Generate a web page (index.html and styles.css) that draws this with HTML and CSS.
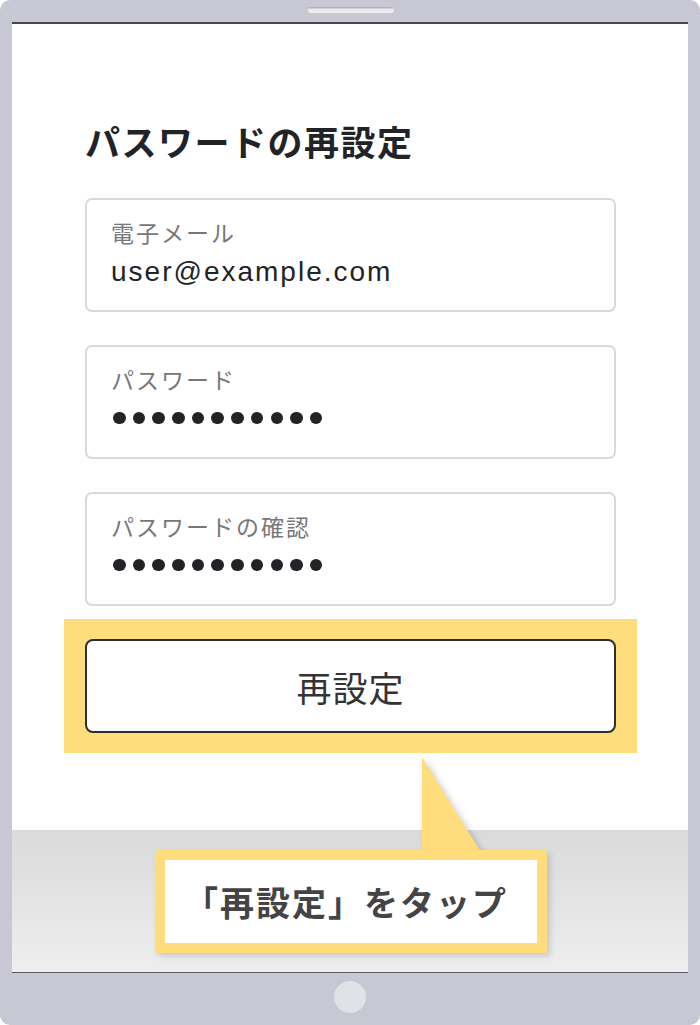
FILE: index.html
```html
<!DOCTYPE html>
<html lang="ja">
<head>
<meta charset="utf-8">
<title>パスワードの再設定</title>
<link rel="stylesheet" href="styles.css">
</head>
<body>
<div class="device">
  <div class="device-top"><div class="speaker"></div></div>
  <div class="screen">
    <div class="content">
      <h1 class="title">パスワードの再設定</h1>
      <div class="fields">
        <div class="field">
          <div class="label">電子メール</div>
          <div class="value">user@example.com</div>
        </div>
        <div class="field">
          <div class="label">パスワード</div>
          <div class="dots"><span class="dot"></span><span class="dot"></span><span class="dot"></span><span class="dot"></span><span class="dot"></span><span class="dot"></span><span class="dot"></span><span class="dot"></span><span class="dot"></span><span class="dot"></span><span class="dot"></span></div>
        </div>
        <div class="field">
          <div class="label">パスワードの確認</div>
          <div class="dots"><span class="dot"></span><span class="dot"></span><span class="dot"></span><span class="dot"></span><span class="dot"></span><span class="dot"></span><span class="dot"></span><span class="dot"></span><span class="dot"></span><span class="dot"></span><span class="dot"></span></div>
        </div>
      </div>
      <div class="highlight">
        <div class="button">再設定</div>
      </div>
    </div>
    <div class="toolbar"></div>
    <svg class="pointer" width="62" height="100" viewBox="0 0 62 100"><polygon points="0,0 0,100 62,100" fill="#ffdc7c"/></svg>
    <div class="callout">「再設定」をタップ</div>
  </div>
  <div class="device-bottom"><div class="home"></div></div>
</div>
</body>
</html>
```

FILE: styles.css
```css
html, body {
  margin: 0;
  padding: 0;
  background: #ffffff;
}
body {
  font-family: "Noto Sans CJK JP", "Noto Sans", sans-serif;
}
.device {
  width: 700px;
  height: 1025px;
  background: #c8c8d4;
  border-radius: 10px;
  display: flex;
  flex-direction: column;
  overflow: hidden;
}
.device-top {
  height: 22px;
  display: flex;
  justify-content: center;
  align-items: flex-start;
  padding-left: 2px;
  box-sizing: border-box;
}
.speaker {
  margin-top: 7px;
  width: 86px;
  height: 6px;
  border-radius: 4px;
  background: linear-gradient(#a4a4a8, #e9e9ec 40%, #f0f0f2);
}
.screen {
  position: relative;
  margin: 0 12px;
  height: 951px;
  box-sizing: border-box;
  background: #ffffff;
  border-top: 2px solid #45464a;
  border-bottom: 1px solid #5a5a5e;
  display: flex;
  flex-direction: column;
}
.content {
  flex: 1;
  padding: 97px 72px 0 73px;
}
.title {
  margin: 0;
  font-size: 35px;
  line-height: 40px;
  font-weight: 700;
  letter-spacing: 1.5px;
  color: #222326;
}
.fields {
  margin-top: 37px;
  display: flex;
  flex-direction: column;
  gap: 33px;
}
.field {
  height: 114px;
  box-sizing: border-box;
  border: 2px solid #d6d9dd;
  border-radius: 7px;
  padding: 18px 24px 0;
}
.label {
  font-size: 23px;
  line-height: 28px;
  letter-spacing: 2px;
  color: #77777a;
}
.value {
  margin-top: 10px;
  font-family: "Liberation Sans", Arial, sans-serif;
  font-size: 28px;
  line-height: 32px;
  letter-spacing: 2px;
  color: #222326;
}
.dots {
  margin-top: 12px;
  height: 26px;
  display: flex;
  align-items: center;
  gap: 7.2px;
  padding-left: 2px;
}
.dot {
  width: 12.5px;
  height: 12.5px;
  border-radius: 50%;
  background: #222326;
}
.highlight {
  margin: 13px -21px 0 -21px;
  padding: 20px 21px;
  background: #ffdc7c;
}
.button {
  height: 94px;
  box-sizing: border-box;
  background: #ffffff;
  border: 2px solid #2c2d30;
  border-radius: 8px;
  display: flex;
  align-items: center;
  justify-content: center;
  font-size: 35px;
  letter-spacing: 1px;
  color: #333336;
}
.toolbar {
  height: 142px;
  background: linear-gradient(#dadada, #eeeeee);
}
.pointer {
  position: absolute;
  left: 410px;
  top: 733px;
  filter: drop-shadow(3px 2px 3px rgba(0, 0, 0, 0.18));
}
.callout {
  position: absolute;
  left: 143px;
  top: 826px;
  width: 392px;
  height: 103px;
  box-sizing: border-box;
  border: 10px solid #ffdc7c;
  background: #ffffff;
  box-shadow: 3px 3px 6px rgba(0, 0, 0, 0.15);
  display: flex;
  align-items: center;
  justify-content: center;
  padding-right: 10px;
  font-size: 34px;
  font-weight: 700;
  letter-spacing: 2px;
  color: #444446;
}
.device-bottom {
  flex: 1;
  display: flex;
  justify-content: center;
  align-items: flex-start;
  padding-top: 8px;
}
.home {
  width: 32px;
  height: 32px;
  border-radius: 50%;
  background: #e1e2e8;
}
```
